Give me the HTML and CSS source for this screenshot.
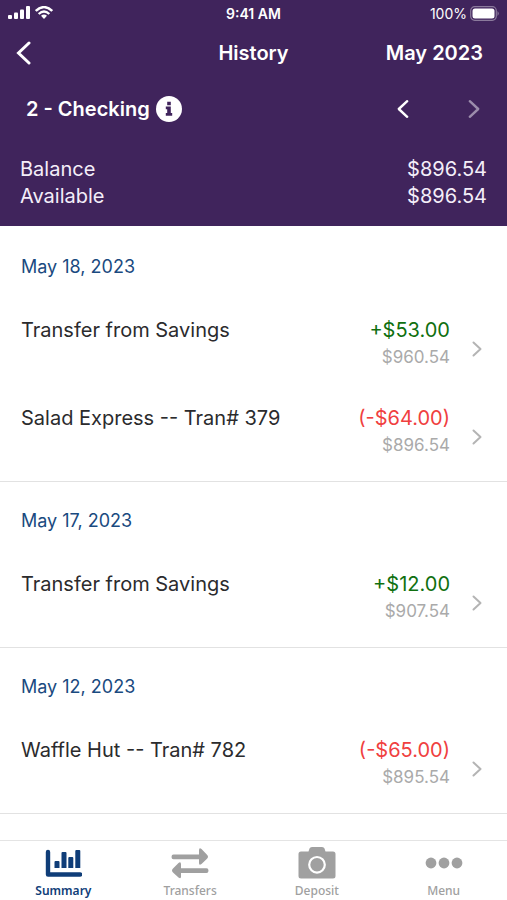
FILE: index.html
```html
<!DOCTYPE html>
<html lang="en">
<head>
<meta charset="utf-8">
<meta name="viewport" content="width=device-width, initial-scale=1">
<title>History</title>
<link rel="stylesheet" href="styles.css">
</head>
<body>
<svg class="defs" aria-hidden="true">
  <symbol id="chevron" viewBox="0 0 10 16"><path d="M1.5 1.5 L8.5 8 L1.5 14.5"/></symbol>
</svg>
<div class="app">
  <header class="header">
    <div class="status">
      <div class="signal">
        <svg width="22" height="14" viewBox="0 0 22 14" fill="#fff" aria-hidden="true">
          <rect x="0" y="9" width="4" height="4" rx="1"/><rect x="6" y="6.5" width="4" height="6.5" rx="1"/><rect x="12" y="3.5" width="4" height="9.500" rx="1"/><rect x="18" y="0" width="4" height="13" rx="1"/>
        </svg>
        <svg width="18" height="13" viewBox="0 0 18 13" fill="none" stroke="#fff" stroke-width="2.400" aria-hidden="true">
          <path d="M.8 5 Q9 -2.800 17.200 5"/><path d="M3.700 8 Q9 3 14.300 8"/><path d="M6 9.800 Q9 7.400 12 9.800 L9 12.900Z" fill="#fff" stroke="none"/>
        </svg>
      </div>
      <div class="clock">9:41 AM</div>
      <div class="power">100%
        <svg width="29" height="15" viewBox="0 0 29 15" aria-hidden="true">
          <rect x=".7" y=".7" width="25.600" height="13.600" rx="4" fill="none" stroke="#8b7a9c" stroke-width="1.200"/><rect x="2.500" y="2.500" width="22" height="10" rx="2.500" fill="#fff"/><path d="M27.500 5 Q30 7.500 27.500 10Z" fill="#8b7a9c"/>
        </svg>
      </div>
    </div>
    <nav class="topnav" aria-label="Page">
      <button class="icon-button" aria-label="Back"><svg width="15" height="24" viewBox="0 0 15 24"><path class="back" d="M13 2 L2.500 12 L13 22"/></svg></button>
      <h1>History</h1>
      <button class="month">May 2023</button>
    </nav>
    <div class="account">
      <h2>2 - Checking</h2>
      <button class="icon-button" aria-label="Account information"><svg width="26" height="26" viewBox="0 0 26 26"><circle cx="13" cy="13" r="13" fill="#fff"/><path fill="#40245c" d="M11.200 5.800h3.600v3.400h-3.600zM9.800 10.500h5v6.500H16.200v2.700H9.800v-2.700h1.400V13.200H9.800z"/></svg></button>
      <div class="pager">
        <button class="icon-button" aria-label="Previous account"><svg class="flip" width="12" height="20"><use href="#chevron"/></svg></button>
        <button class="icon-button next" aria-label="Next account" disabled><svg width="12" height="20"><use href="#chevron"/></svg></button>
      </div>
    </div>
    <dl class="totals">
      <div><dt>Balance</dt><dd>$896.54</dd></div>
      <div><dt>Available</dt><dd>$896.54</dd></div>
    </dl>
  </header>
  <main class="history">
    <section>
      <h3>May 18, 2023</h3>
      <a class="entry" href="#t1"><span class="title">Transfer from Savings</span><span class="sums"><span class="amount credit">+$53.00</span><span class="after">$960.54</span></span><svg width="10" height="16"><use href="#chevron"/></svg></a>
      <a class="entry" href="#t2"><span class="title">Salad Express -- Tran# 379</span><span class="sums"><span class="amount debit">(-$64.00)</span><span class="after">$896.54</span></span><svg width="10" height="16"><use href="#chevron"/></svg></a>
    </section>
    <section>
      <h3>May 17, 2023</h3>
      <a class="entry" href="#t3"><span class="title">Transfer from Savings</span><span class="sums"><span class="amount credit">+$12.00</span><span class="after">$907.54</span></span><svg width="10" height="16"><use href="#chevron"/></svg></a>
    </section>
    <section>
      <h3>May 12, 2023</h3>
      <a class="entry" href="#t4"><span class="title">Waffle Hut -- Tran# 782</span><span class="sums"><span class="amount debit">(-$65.00)</span><span class="after">$895.54</span></span><svg width="10" height="16"><use href="#chevron"/></svg></a>
    </section>
  </main>
  <nav class="tabs" aria-label="Main">
    <a class="current" href="#summary" aria-current="page">
      <svg width="38" height="32" viewBox="0 0 38 32" fill="none" stroke="currentColor" stroke-width="4.400" stroke-linecap="round" stroke-linejoin="round"><path d="M4 5V27.500H36"/><path stroke="none" fill="currentColor" d="M11.500 14h3q1 0 1 1v6h-5v-6q0-1 1-1zM18.500 5h3q1 0 1 1v15h-5V6q0-1 1-1zM25.300 10h3q1 0 1 1v10h-5V11q0-1 1-1zM32.300 3h3q1 0 1 1v17h-5V4q0-1 1-1z"/></svg>
      Summary</a>
    <a href="#transfers">
      <svg width="38" height="32" viewBox="0 0 38 32" fill="currentColor"><path d="M2.500 7.500H28V3.500Q28 0 30.500 2L36 7.800Q38 9.800 36 11.800L30.500 17Q28 19 28 16V12.300H2.500Q.5 12.300 .5 9.900Q.5 7.500 2.500 7.500Z"/><path d="M35.500 21.300H10V17.500Q10 14 7.500 16L2 21.500Q0 23.500 2 25.500L7.500 30.500Q10 32.500 10 29.500V26H35.500Q37.500 26 37.500 23.700Q37.500 21.300 35.500 21.300Z"/></svg>
      Transfers</a>
    <a href="#deposit">
      <svg width="38" height="32" viewBox="0 0 38 32" fill="currentColor"><path d="M3 4.500H10.500L11.500 1.500Q12 0 14 0H24Q26 0 26.500 1.500L27.500 4.500H35Q37.500 4.500 37.500 7V29Q37.500 31.500 35 31.500H3Q.5 31.500 .5 29V7Q.5 4.500 3 4.500Z"/><circle cx="19" cy="17.800" r="7.800" fill="none" stroke="#fff" stroke-width="2.200"/></svg>
      Deposit</a>
    <a href="#menu">
      <svg width="38" height="32" viewBox="0 0 38 32" fill="currentColor"><circle cx="6" cy="16" r="5.400"/><circle cx="19" cy="16" r="5.400"/><circle cx="32" cy="16" r="5.400"/></svg>
      Menu</a>
  </nav>
</div>
</body>
</html>
```

FILE: styles.css
```css
* { box-sizing: border-box; }

body {
  margin: 0;
  font-family: Inter, "Liberation Sans", sans-serif;
  color: #2b2b2d;
  background: #fff;
}

h1, h2, h3, dl, dd { margin: 0; font-weight: 400; }

svg { display: block; flex: none; }

a { color: inherit; text-decoration: none; }

button {
  padding: 0;
  border: 0;
  background: none;
  color: inherit;
  font: inherit;
}

.defs { display: none; }

#chevron {
  fill: none;
  stroke: currentColor;
  stroke-width: 2;
  stroke-linecap: round;
  stroke-linejoin: round;
}

.app {
  display: flex;
  flex-direction: column;
  height: 100vh;
}

.header {
  background: #40245c;
  color: #fff;
  padding-bottom: 16px;
}

.status, .topnav {
  display: grid;
  grid-template-columns: 1fr auto 1fr;
  align-items: center;
}

.status {
  height: 28px;
  padding: 0 8px 2px;
  font-size: 14px;
}

.signal { display: flex; gap: 5px; }

.clock { font-weight: 600; }

.power {
  display: flex;
  justify-content: flex-end;
  align-items: center;
  gap: 3px;
}

.topnav {
  height: 50px;
  padding: 0 16px;
  font-size: 20px;
}

.topnav h1, .month, .account h2 {
  font-size: 20px;
  font-weight: 600;
}

.month {
  justify-self: end;
  margin-right: 8px;
}

.back {
  fill: none;
  stroke: #fff;
  stroke-width: 3;
  stroke-linecap: round;
  stroke-linejoin: miter;
}

.icon-button { justify-self: start; }

.account {
  display: flex;
  align-items: center;
  gap: 6px;
  height: 62px;
  padding: 0 27px 0 26px;
}

.pager {
  display: flex;
  gap: 59px;
  margin-left: auto;
}

.flip { transform: scaleX(-1); }

.next { color: #9c8dac; }

.totals {
  padding: 16px 20px 0;
  font-size: 20px;
  line-height: 27px;
  color: #f4eef9;
}

.totals div {
  display: flex;
  justify-content: space-between;
}

.history {
  flex: 1;
  min-height: 0;
  padding-top: 2px;
  overflow: hidden;
}

.history section { border-bottom: 1px solid #e2e2e2; }

.history h3 {
  padding: 26px 21px 25px;
  font-size: 18px;
  line-height: 26px;
  color: #1a4a80;
}

.entry {
  display: flex;
  align-items: flex-start;
  height: 88px;
  padding: 11px 25px 0 21px;
  font-size: 20px;
  line-height: 28px;
}

.title { flex: 1; }

.sums {
  display: flex;
  flex-direction: column;
  align-items: flex-end;
  margin-right: 22px;
}

.after {
  font-size: 17px;
  line-height: 26px;
  color: #aaa;
}

.credit { color: #107010; }

.debit { color: #f04040; }

.entry svg {
  margin-top: 25px;
  color: #b4b4b4;
}

.tabs {
  display: grid;
  grid-template-columns: repeat(4, 1fr);
  height: 60px;
  border-top: 1px solid #e4e4e4;
  background: #fff;
}

.tabs a {
  display: flex;
  flex-direction: column;
  align-items: center;
  gap: 3px;
  padding-top: 6px;
  color: #a0a0a0;
  font-family: "Noto Sans", sans-serif;
  font-size: 12px;
  font-weight: 500;
  line-height: 18px;
}

.tabs .current {
  color: #0f3d78;
  font-weight: 600;
}
```
